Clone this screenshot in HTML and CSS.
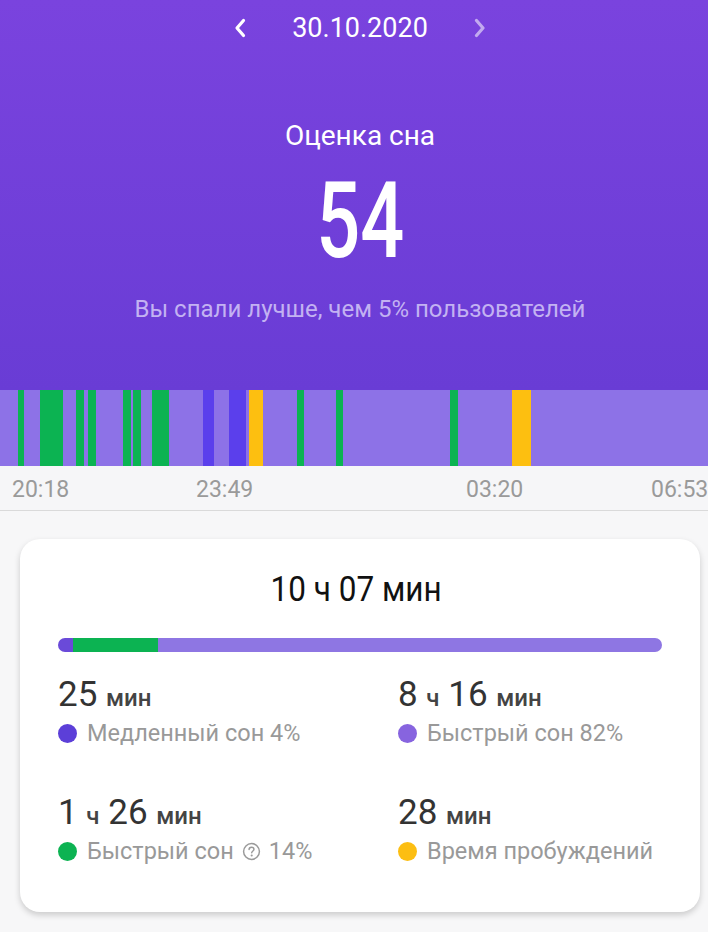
FILE: index.html
```html
<!DOCTYPE html>
<html>

<head>
    <meta charset="utf-8">
    <title>Оценка сна</title>
    <link rel="stylesheet" href="styles.css">
</head>

<body>
    <header class="top">
        <div class="date-row">
            <span class="arrow">
                <svg width="14" height="22" viewBox="0 0 14 22"><path d="M10.5 3.5 L4 11 L10.5 18.5" fill="none" stroke="#fff" stroke-width="3.2" stroke-linecap="round" stroke-linejoin="round"/></svg>
            </span>
            <span class="date">30.10.2020</span>
            <span class="arrow dim">
                <svg width="14" height="22" viewBox="0 0 14 22"><path d="M3.5 3.5 L10 11 L3.5 18.5" fill="none" stroke="#fff" stroke-width="3.2" stroke-linecap="round" stroke-linejoin="round"/></svg>
            </span>
        </div>
        <div class="score-title">Оценка сна</div>
        <div class="score"><span>54</span></div>
        <div class="score-note">Вы спали лучше, чем 5% пользователей</div>
    </header>

    <section class="timeline">
        <div class="bars">
            <i class="g" style="left:18px;width:6px"></i>
            <i class="g" style="left:40px;width:23px"></i>
            <i class="g" style="left:76px;width:8px"></i>
            <i class="g" style="left:88px;width:8px"></i>
            <i class="g" style="left:123px;width:8px"></i>
            <i class="g" style="left:133px;width:8px"></i>
            <i class="g" style="left:152px;width:17px"></i>
            <i class="b" style="left:203px;width:11px"></i>
            <i class="b" style="left:229px;width:17px"></i>
            <i class="y" style="left:249px;width:14px"></i>
            <i class="g" style="left:297px;width:7px"></i>
            <i class="g" style="left:336px;width:7px"></i>
            <i class="g" style="left:450px;width:8px"></i>
            <i class="y" style="left:512px;width:19px"></i>
        </div>
        <div class="times">
            <span style="left:12px">20:18</span>
            <span style="left:196px">23:49</span>
            <span style="left:466px">03:20</span>
            <span style="left:651px">06:53</span>
        </div>
    </section>

    <main class="page">
        <div class="card">
            <div class="total"><span>10 ч 07 мин</span></div>
            <div class="progress">
                <span class="p-deep" style="width:15px"></span>
                <span class="p-light" style="width:85px"></span>
                <span class="p-rem"></span>
            </div>
            <div class="stats">
                <div class="stat">
                    <div class="value">25 <small>мин</small></div>
                    <div class="label"><span class="dot deep"></span>Медленный сон 4%</div>
                </div>
                <div class="stat">
                    <div class="value">8 <small>ч</small> 16 <small>мин</small></div>
                    <div class="label"><span class="dot rem"></span>Быстрый сон 82%</div>
                </div>
                <div class="stat">
                    <div class="value">1 <small>ч</small> 26 <small>мин</small></div>
                    <div class="label"><span class="dot light"></span>Быстрый сон
                        <svg class="help" width="19" height="19" viewBox="0 0 18 18"><circle cx="9" cy="9" r="7.5" fill="none" stroke="#9a9a9a" stroke-width="1.4"/><path d="M6.7 7.2 C6.7 5.9 7.7 5 9 5 C10.3 5 11.3 5.9 11.3 7 C11.3 8.5 9.2 8.6 9.2 10.3" fill="none" stroke="#9a9a9a" stroke-width="1.4" stroke-linecap="round"/><circle cx="9.2" cy="12.8" r="1" fill="#9a9a9a"/></svg>
                        14%</div>
                </div>
                <div class="stat">
                    <div class="value">28 <small>мин</small></div>
                    <div class="label"><span class="dot wake"></span>Время пробуждений</div>
                </div>
            </div>
        </div>
    </main>
</body>

</html>
```

FILE: styles.css
```css
body {
    margin: 0;
    width: 708px;
    height: 932px;
    overflow: hidden;
    background-color: #f7f7f8;
    font-family: Roboto, "Noto Sans", sans-serif;
}

.top {
    height: 390px;
    padding-left: 12px;
    background: linear-gradient(#7a43de, #693cd5);
    color: #fff;
    text-align: center;
}

.date-row {
    height: 56px;
    display: flex;
    align-items: center;
    justify-content: center;
    gap: 45px;
}

.date {
    font-size: 27px;
    width: 136px;
}

.arrow {
    display: flex;
    width: 14px;
}

.arrow.dim {
    opacity: 0.55;
}

.score-title {
    margin-top: 62px;
    font-size: 28px;
    line-height: 36px;
}

.score {
    margin-top: 14px;
    font-size: 106px;
    font-weight: 500;
    line-height: 106px;
}

.score span {
    display: inline-block;
    transform: scaleX(0.73);
}

.score-note {
    margin-top: 20px;
    font-size: 24px;
    line-height: 30px;
    color: #c3b2f2;
}

.timeline {
    background-color: #f6f6f8;
    border-bottom: 1px solid #dadada;
}

.bars {
    position: relative;
    height: 76px;
    background-color: #8d72e7;
}

.bars i {
    position: absolute;
    top: 0;
    bottom: 0;
}

.bars .g { background-color: #0cb352; }
.bars .b { background-color: #5b3fec; }
.bars .y { background-color: #fdbf10; }

.times {
    position: relative;
    height: 44px;
    font-size: 23px;
    color: #9a9a9a;
}

.times span {
    position: absolute;
    top: 10px;
}

.page {
    padding: 28px 8px 0 20px;
}

.card {
    background-color: #fff;
    border-radius: 20px;
    box-shadow: 0 3px 6px rgba(0, 0, 0, 0.18);
    padding: 31px 38px 38px 38px;
    height: 304px;
}

.total {
    text-align: center;
    padding-right: 8px;
    font-size: 35px;
    line-height: 40px;
    color: #111;
}

.total span {
    display: inline-block;
    transform: scaleX(0.9);
}

.progress {
    margin-top: 28px;
    height: 14px;
    border-radius: 7px;
    overflow: hidden;
    display: flex;
}

.p-deep { background-color: #6a4ad9; }
.p-light { background-color: #0cb352; }
.p-rem { flex: 1; background-color: #8e76e3; }

.stats {
    margin-top: 23px;
    display: grid;
    grid-template-columns: 340px 1fr;
    row-gap: 45px;
}

.value {
    font-size: 35px;
    line-height: 40px;
    color: #333;
}

.value small {
    font-size: 24px;
    font-weight: 500;
    color: #444;
}

.label {
    margin-top: 0;
    display: flex;
    align-items: center;
    font-size: 23.5px;
    line-height: 30px;
    color: #999;
    white-space: nowrap;
}

.dot {
    flex: none;
    width: 19px;
    height: 19px;
    border-radius: 50%;
    margin-right: 10px;
}

.dot.deep { background-color: #5c3fd8; }
.dot.rem { background-color: #8764df; }
.dot.light { background-color: #0cb352; }
.dot.wake { background-color: #fcbe12; }

.help {
    margin: 0 8px;
}
```
